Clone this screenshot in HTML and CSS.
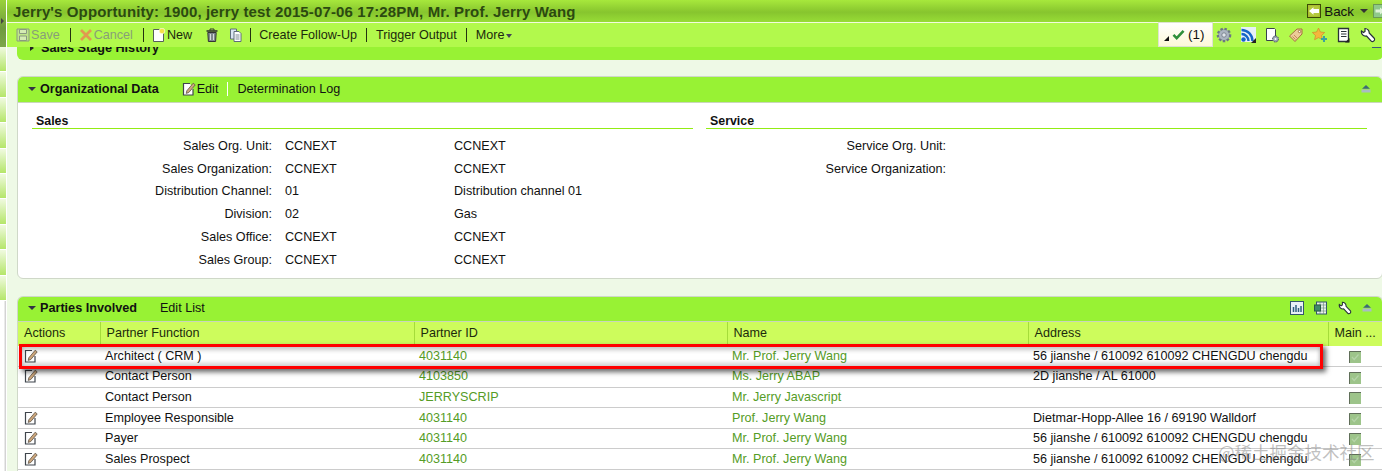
FILE: index.html
```html
<!DOCTYPE html>
<html lang="en">
<head>
<meta charset="utf-8">
<title>Jerry's Opportunity</title>
<link rel="stylesheet" href="styles.css">
</head>
<body>
<div class="page">
  <aside class="rail">
    <div class="rail-head"><i class="rail-arrow"></i></div>
    <div class="rail-item"></div><div class="rail-item"></div><div class="rail-item"></div><div class="rail-item"></div><div class="rail-item"></div><div class="rail-item"></div><div class="rail-item"></div><div class="rail-item"></div><div class="rail-item"></div><div class="rail-item"></div>
    <div class="rail-rest"></div>
  </aside>
  <main class="main">
    <header class="titlebar">
      <h1 class="title">Jerry's Opportunity: 1900, jerry test 2015-07-06 17:28PM, Mr. Prof. Jerry Wang</h1>
      <div class="back">
        <svg class="ico14" viewBox="0 0 14 14"><rect x=".5" y=".5" width="13" height="13" fill="#a9bf2e" stroke="#3d4a06"/><rect x="2" y="2" width="10" height="10" rx="2" fill="#b4c93c"/><path d="M2 7l4.500-3.800V5h5.500v4H6.500v1.800z" fill="#fff"/></svg>
        <span>Back</span><i class="caret"></i>
        <svg class="ico14" viewBox="0 0 14 14"><rect x=".5" y=".5" width="13" height="13" fill="#8fc98a" stroke="#6b9a55"/><path d="M11.500 7L7 3.500V5.500H2.500v3H7v2z" fill="#dff3d8"/></svg>
      </div>
    </header>
    <nav class="toolbar">
      <span class="tool off"><svg class="ico14 lead" viewBox="0 0 14 14"><path d="M1 1h12v12H1z" fill="#bfe58a" stroke="#8a9a80"/><path d="M3.500 1.500h7v4h-7zM3.500 8h7v4.500h-7z" fill="#d5ecb4" stroke="#8a9a80"/></svg>Save</span><i class="sep"></i>
      <span class="tool off"><svg class="ico14 lead" viewBox="0 0 14 14"><path d="M2 2l10 10M12 2L2 12" stroke="#e09a50" stroke-width="2.800"/></svg>Cancel</span><i class="sep"></i>
      <span class="tool"><svg class="ico14 lead" viewBox="0 0 14 14"><path d="M1.500 1.500h7l3 3v9h-10z" fill="#fff" stroke="#55605a"/><circle cx="10" cy="3" r="2.800" fill="#f5e04a" stroke="#fff" stroke-width=".6"/></svg>New</span>
      <svg class="ico14 trash" viewBox="0 0 14 14"><path d="M1.500 3h11" stroke="#333" stroke-width="1.600"/><path d="M5 2.500V1h4v1.500" fill="none" stroke="#333"/><path d="M2.800 4.500h8.400l-.6 9H3.400z" fill="#7f878d" stroke="#333"/><path d="M5.500 6v6M8.500 6v6" stroke="#d5dadd"/></svg>
      <svg class="ico14 copy" viewBox="0 0 14 14"><path d="M1.500 1h6v10h-6z" fill="#dbe6f2" stroke="#5f6d7a"/><path d="M5 3.500h5l2 2v8H5z" fill="#fff" stroke="#5f6d7a"/><path d="M6.500 7h4M6.500 9h4M6.500 11h4" stroke="#7a8792"/></svg><i class="sep"></i>
      <span class="tool">Create Follow-Up</span><i class="sep wide"></i>
      <span class="tool">Trigger Output</span><i class="sep wide"></i>
      <span class="tool">More<i class="more-caret"></i></span>
      <div class="tool-right">
        <div class="msgbox">
          <i class="corner"></i>
          <svg class="check" viewBox="0 0 14 12"><path d="M1.500 6.500l3.500 3.500 7.500-8" fill="none" stroke="#2f8f3c" stroke-width="2.800"/></svg>
          <span>(1)</span>
        </div>
        <svg class="ico16" viewBox="0 0 16 16"><circle cx="8" cy="8" r="6" fill="#94a0ae" stroke="#6d7683" stroke-width="2.600" stroke-dasharray="2.400 1.600"/><circle cx="8" cy="8" r="5" fill="#aab4c0"/><circle cx="8" cy="8" r="2.200" fill="#dfe5ea" stroke="#6d7683" stroke-width=".8"/></svg>
        <svg class="ico16" viewBox="0 0 16 16"><rect x="1" y="0" width="15" height="15" fill="#e6f0f7"/><circle cx="3.500" cy="12.500" r="2.200" fill="#1565c8"/><path d="M1.500 7a7 7 0 0 1 7 7M1.500 3a11 11 0 0 1 11 11" fill="none" stroke="#1565c8" stroke-width="2.400"/><path d="M16 11v5h-5z" fill="#222"/></svg>
        <svg class="ico16" viewBox="0 0 16 16"><path d="M2.500 1.500h8l1 1v11h-9z" fill="#fff" stroke="#39424d"/><circle cx="11.500" cy="12" r="3" fill="#9aa6b2" stroke="#4b5560" stroke-dasharray="1.500 .8"/><circle cx="11.500" cy="12" r="1" fill="#fff"/></svg>
        <svg class="ico16" viewBox="0 0 16 16"><path d="M9 2h5v5l-7 7.500L1.500 9z" fill="#eccb98" stroke="#a5713f"/><circle cx="11.500" cy="4.500" r="1.200" fill="#fff" stroke="#a5713f"/><path d="M6 8l3 3M4.500 9.500l3 3" stroke="#c98a5a"/></svg>
        <svg class="ico16" viewBox="0 0 16 16"><path d="M6.500 1l1.900 4 4.300.5-3.200 3 .9 4.200-3.900-2.100-3.900 2.100.9-4.200-3.200-3 4.300-.5z" fill="#f4b73c" stroke="#d08a2a" stroke-width=".7"/><path d="M12 9v6M9 12h6" stroke="#3aa3a0" stroke-width="2"/></svg>
        <svg class="ico16" viewBox="0 0 16 16"><path d="M2.500 1.500h10v13h-10z" fill="#fff" stroke="#2a3138" stroke-width="1.300"/><path d="M5 4.500h5.500M5 7h5.500M5 9.500h5.500" stroke="#2a3138"/><path d="M13.500 11v4.500H9z" fill="#222"/></svg>
        <svg class="ico16" viewBox="0 0 16 16"><use href="#wrench"/></svg>
      </div>
    </nav>

    <div class="content">
      <section class="panel stub">
        <div class="panel-head stub-head">
          <i class="tri-right"></i><span class="panel-title">Sales Stage History</span>
          <i class="stub-dash"></i>
        </div>
      </section>

      <section class="panel org">
        <div class="panel-head">
          <i class="tri-down"></i><span class="panel-title">Organizational Data</span>
          <span class="head-actions">
            <svg class="ico14 pencil" viewBox="0 0 14 14"><use href="#pencil"/></svg><span>Edit</span><i class="sep tall"></i><span>Determination Log</span>
          </span>
          <svg class="collapse" viewBox="0 0 10 8"><use href="#collapse"/></svg>
        </div>
        <div class="org-body">
          <div class="org-col sales">
            <h2 class="col-title">Sales</h2>
            <div class="row"><label>Sales Org. Unit:</label><span class="v1">CCNEXT</span><span>CCNEXT</span></div>
            <div class="row"><label>Sales Organization:</label><span class="v1">CCNEXT</span><span>CCNEXT</span></div>
            <div class="row"><label>Distribution Channel:</label><span class="v1">01</span><span>Distribution channel 01</span></div>
            <div class="row"><label>Division:</label><span class="v1">02</span><span>Gas</span></div>
            <div class="row"><label>Sales Office:</label><span class="v1">CCNEXT</span><span>CCNEXT</span></div>
            <div class="row"><label>Sales Group:</label><span class="v1">CCNEXT</span><span>CCNEXT</span></div>
          </div>
          <div class="org-col service">
            <h2 class="col-title">Service</h2>
            <div class="row"><label>Service Org. Unit:</label></div>
            <div class="row"><label>Service Organization:</label></div>
          </div>
        </div>
      </section>

      <section class="panel parties">
        <div class="panel-head parties-head">
          <i class="tri-down"></i><span class="panel-title">Parties Involved</span>
          <span class="head-actions"><span>Edit List</span></span>
          <span class="head-icons">
            <svg class="ico14" viewBox="0 0 14 14"><rect x=".5" y=".5" width="13" height="13" fill="#e8f0f6" stroke="#33566b"/><path d="M3.500 11V6M6 11V4M8.500 11V7M11 11V5" stroke="#2f5f80" stroke-width="1.500"/></svg>
            <svg class="ico14" viewBox="0 0 14 14"><rect x="2.500" y="1" width="10" height="12" fill="#e9f1ea" stroke="#33566b"/><path d="M2.500 4h10M2.500 7h10M2.500 10h10M6 1v12M9.500 1v12" stroke="#6a8a7c" stroke-width=".6"/><rect x="0.500" y="4" width="6" height="6" fill="#3f8a68" stroke="#2a5a48"/></svg>
            <svg class="ico14" viewBox="0 0 16 16"><use href="#wrench"/></svg>
            <svg class="collapse inline" viewBox="0 0 10 8"><use href="#collapse"/></svg>
          </span>
        </div>
        <table class="grid">
          <colgroup><col class="c1"><col class="c2"><col class="c3"><col class="c4"><col class="c5"><col class="c6"></colgroup>
          <thead>
            <tr><th>Actions</th><th>Partner Function</th><th>Partner ID</th><th>Name</th><th>Address</th><th>Main ...</th></tr>
          </thead>
          <tbody>
            <tr><td class="act"><svg class="pen" viewBox="0 0 14 14"><use href="#pencil"/></svg></td><td>Architect ( CRM )</td><td class="lnk">4031140</td><td class="lnk">Mr. Prof. Jerry Wang</td><td>56 jianshe / 610092 610092 CHENGDU chengdu</td><td class="chk"><svg class="box" viewBox="0 0 12 12"><use href="#box-on"/></svg></td></tr>
            <tr><td class="act"><svg class="pen" viewBox="0 0 14 14"><use href="#pencil"/></svg></td><td>Contact Person</td><td class="lnk">4103850</td><td class="lnk">Ms. Jerry ABAP</td><td>2D jianshe / AL 61000</td><td class="chk"><svg class="box" viewBox="0 0 12 12"><use href="#box-on"/></svg></td></tr>
            <tr><td class="act"></td><td>Contact Person</td><td class="lnk">JERRYSCRIP</td><td class="lnk">Mr. Jerry Javascript</td><td></td><td class="chk"><svg class="box" viewBox="0 0 12 12"><use href="#box-off"/></svg></td></tr>
            <tr><td class="act"><svg class="pen" viewBox="0 0 14 14"><use href="#pencil"/></svg></td><td>Employee Responsible</td><td class="lnk">4031140</td><td class="lnk">Prof. Jerry Wang</td><td>Dietmar-Hopp-Allee 16 / 69190 Walldorf</td><td class="chk"><svg class="box" viewBox="0 0 12 12"><use href="#box-on"/></svg></td></tr>
            <tr><td class="act"><svg class="pen" viewBox="0 0 14 14"><use href="#pencil"/></svg></td><td>Payer</td><td class="lnk">4031140</td><td class="lnk">Mr. Prof. Jerry Wang</td><td>56 jianshe / 610092 610092 CHENGDU chengdu</td><td class="chk"><svg class="box" viewBox="0 0 12 12"><use href="#box-on"/></svg></td></tr>
            <tr><td class="act"><svg class="pen" viewBox="0 0 14 14"><use href="#pencil"/></svg></td><td>Sales Prospect</td><td class="lnk">4031140</td><td class="lnk">Mr. Prof. Jerry Wang</td><td>56 jianshe / 610092 610092 CHENGDU chengdu</td><td class="chk"><svg class="box" viewBox="0 0 12 12"><use href="#box-on"/></svg></td></tr>
          </tbody>
        </table>
      </section>
    </div>
  </main>
</div>
<div class="highlight"></div>
<div class="watermark">@稀土掘金技术社区</div>
<svg class="defs" width="0" height="0"><defs>
  <g id="pencil"><path d="M8 1.500H1.500v11.500h9.500V7" fill="#fff" stroke="#3f454c" stroke-width="1.200"/><path d="M4.800 8.800L11.200 1.200l2 1.700-6.400 7.600-2.600.9z" fill="#cda77c" stroke="#5f5446" stroke-width=".8"/></g>
  <g id="wrench"><path d="M5 1.500V4.500L3.500 5.500 1.500 4A4.200 4.200 0 0 0 6.500 9L11 13.800A1.900 1.900 0 0 0 14 11L9.200 6A4.200 4.200 0 0 0 5 1.500z" fill="#fff" stroke="#26303a" stroke-width="1.200"/></g>
  <g id="collapse"><path d="M5 0l4 3.800H1z" fill="#3d6a78"/><path d="M0.500 4.500h9V7.500h-9z" fill="#a9bcc4"/></g>
  <g id="box-on"><rect width="12" height="12" fill="#9dc48a"/><path d="M.5 12V.5H12" fill="none" stroke="#5f6d58"/><path d="M3 6l2.200 2.500L9.500 3.500" fill="none" stroke="#b5d4a8" stroke-width="1.200"/></g>
  <g id="box-off"><rect width="12" height="12" fill="#9dc48a"/><path d="M.5 12V.5H12" fill="none" stroke="#5f6d58"/></g>
</defs></svg>
</body>
</html>
```
FILE: styles.css
```css
* { box-sizing: border-box; }
html, body { margin: 0; height: 100%; overflow: hidden; }
body { font-family: "Liberation Sans", Arial, sans-serif; font-size: 12.6px; color: #111; background: #eef9e6; position: relative; }
.page { display: flex; width: 1382px; height: 471px; overflow: hidden; }

.rail { width: 7px; flex: none; background: #fff; display: flex; flex-direction: column; border-right: 1px solid #fff; }
.rail-head { height: 47px; flex: none; background: linear-gradient(#9ad23a, #6f9a3e 60%, #7da64a); display: flex; align-items: center; padding-bottom: 6px; }
.rail-arrow { width: 0; height: 0; border: 3px solid transparent; border-left: 3px solid #444; border-right: 0; margin-left: 1px; }
.rail-item { height: 25.400px; flex: none; background: linear-gradient(#f0fae0, #b5e66a); border-bottom: 1px solid #fff; }
.rail-rest { flex: 1; background: linear-gradient(90deg, #fff, #fff 60%, #c8c8c8); }

.main { flex: 1; min-width: 0; display: flex; flex-direction: column; position: relative; }
.titlebar { height: 23px; flex: none; display: flex; align-items: center; justify-content: space-between; padding-left: 6px; background: linear-gradient(#a7e83c, #87c52e 55%, #97dc36); border-bottom: 1px solid #f2fbdf; }
.title { margin: 0; font-size: 15px; font-weight: bold; color: #2c4a10; letter-spacing: .13px; white-space: nowrap; }
.back { display: flex; align-items: center; font-size: 13.400px; color: #111; margin-right: -5px; }
.back span { margin-left: 3px; }
.caret { width: 0; height: 0; border: 4px solid transparent; border-top: 4px solid #333; border-bottom: 0; margin: 0 5px 0 6px; }

.toolbar { height: 24px; flex: none; display: flex; align-items: center; padding-left: 9px; background: #b2f94c; position: relative; z-index: 2; }
.tool { display: inline-flex; align-items: center; white-space: nowrap; color: #1c2a0c; }
.tool.off { color: #889e78; margin-right: 2px; }
.ico14 { width: 14px; height: 14px; flex: none; }
.ico16 { width: 16px; height: 16px; flex: none; }
.lead { margin-right: 1px; }
.sep { width: 1px; height: 14px; background: #23330f; margin: 0 8px; flex: none; }
.sep.wide { margin: 0 9px; }
.trash { margin-left: 13px; }
.copy { margin: 0 -1px 0 10px; }
.more-caret { width: 0; height: 0; border: 3px solid transparent; border-top: 4px solid #445; border-bottom: 0; margin: 2px 0 0 1px; }
.tool-right { margin-left: auto; display: flex; align-items: center; gap: 8px; height: 100%; padding-right: 6px; }
.msgbox { width: 55px; height: 25px; margin: -1px -5px 0 0; background: linear-gradient(#fff, #fdf8d8); border: 1px solid #dde3d0; display: flex; align-items: center; font-size: 13.400px; position: relative; padding-left: 13px; }
.corner { position: absolute; left: 5px; bottom: 5px; width: 0; height: 0; border-style: solid; border-width: 0 0 5px 5px; border-color: transparent transparent #111 transparent; }
.check { width: 13px; height: 11px; margin-right: 3px; flex: none; }

.content { flex: 1; min-height: 0; padding-left: 10px; display: flex; flex-direction: column; }
.panel { background: #fff; border: 1px solid #cfd8c8; border-radius: 6px; margin-right: -1px; }
.panel-head { height: 25px; display: flex; align-items: center; background: #98f234; padding: 0 0 2px 10px; border-radius: 5px 5px 0 0; border-bottom: 1px solid #c9d6bc; flex: none; }
.panel-title { font-weight: bold; font-size: 12.650px; color: #111; white-space: nowrap; }
.stub { height: 13px; background: #98f234; border: 0; border-radius: 0 0 6px 6px; overflow: hidden; }
.stub .stub-head { height: 13px; margin-top: -6px; padding: 0 0 0 13px; border: 0; position: relative; }
.stub-dash { position: absolute; left: 1355px; top: 6px; width: 9px; height: 1px; background: #3d5a78; }
.tri-down { width: 0; height: 0; border: 4px solid transparent; border-top: 4px solid #334; border-bottom: 0; margin-right: 4px; flex: none; }
.tri-right { width: 0; height: 0; border: 3.500px solid transparent; border-left: 4px solid #222; border-right: 0; margin-right: 7px; flex: none; }
.head-actions { display: flex; align-items: center; margin-left: 23px; }
.pencil { margin-right: 1px; }
.sep.tall { margin: 0 9px; background: #fff; }
.collapse { width: 10px; height: 8px; margin: 0 11px 0 auto; flex: none; }
.collapse.inline { margin: 0; }

.org { margin-top: 16px; height: 203px; }
.org .panel-head { height: 26px; }
.org-body { display: flex; padding: 0 15px 0 14px; gap: 13px; }
.org-col.sales { flex: 0 0 661px; }
.org-col.service { flex: 1; }
.col-title { margin: 0 0 5.500px; padding: 11px 0 0 4px; height: 26px; font-size: 12.400px; font-weight: bold; border-bottom: 1px solid #93ec14; color: #111; }
.row { display: flex; height: 22.800px; align-items: center; white-space: nowrap; }
.row label { width: 240px; text-align: right; margin-right: 13px; }
.v1 { width: 169px; }

.parties { margin-top: 17px; flex: 1; border-bottom: 0; border-radius: 6px 6px 0 0; }
.parties .parties-head { padding-bottom: 3px; }
.head-icons { margin-left: auto; display: flex; align-items: center; gap: 10px; padding-right: 10px; }
.grid { width: 100%; border-collapse: collapse; table-layout: fixed; }
.c1 { width: 82px; } .c2 { width: 314px; } .c3 { width: 313px; } .c4 { width: 301px; } .c5 { width: 300px; }
.grid th { height: 24px; background: #cdfc5c; font-weight: normal; text-align: left; padding: 0 6px 2px; border-right: 1px solid #a5dc3a; white-space: nowrap; overflow: hidden; color: #1c2a0c; }
.grid th:last-child { border-right: 0; }
.grid td { height: 20.600px; padding: 0 5px 1px; border-bottom: 1px solid #ccc; white-space: nowrap; overflow: hidden; vertical-align: middle; }
.grid td.lnk { color: #559c26; }
.grid td.act { padding-left: 6px; }
.pen { width: 14px; height: 14px; display: block; }
.grid td.chk { text-align: center; padding: 0 6px 0 5px; }
.box { display: inline-block; width: 12px; height: 12px; vertical-align: middle; }

.highlight { position: absolute; left: 19px; top: 344px; width: 1304px; height: 25px; border: 3px solid #f00; box-shadow: 3px 3px 5px rgba(0,0,0,.6), inset 0 3px 4px rgba(0,0,0,.22), inset 0 -3px 4px rgba(0,0,0,.18); pointer-events: none; }
.watermark { position: absolute; left: 1218px; top: 439px; font-family: "Noto Sans CJK SC", sans-serif; font-size: 17.500px; line-height: 26px; color: rgba(130,130,130,.5); white-space: nowrap; }
.defs { position: absolute; }
```
